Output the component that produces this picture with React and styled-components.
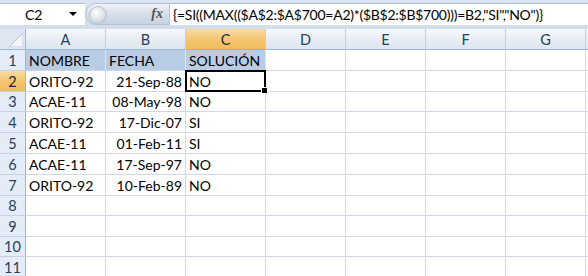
import React from 'react'
import styled, { createGlobalStyle, css } from 'styled-components'

const GlobalStyle = createGlobalStyle`
  body {
    margin: 0;
    background: #ffffff;
    overflow: hidden;
  }
`

const COLS = ['A', 'B', 'C', 'D', 'E', 'F', 'G']
const ROW_HEIGHTS = [21, 21, 20, 21, 21, 21, 21, 20, 21, 20, 21]

const data = [
  ['NOMBRE', 'FECHA', 'SOLUCIÓN'],
  ['ORITO-92', '21-Sep-88', 'NO'],
  ['ACAE-11', '08-May-98', 'NO'],
  ['ORITO-92', '17-Dic-07', 'SI'],
  ['ACAE-11', '01-Feb-11', 'SI'],
  ['ACAE-11', '17-Sep-97', 'NO'],
  ['ORITO-92', '10-Feb-89', 'NO'],
]

const Sheet = styled.div`
  width: 588px;
  height: 276px;
  font-family: Lato, "Liberation Sans", sans-serif;
  font-size: 14px;
  color: #000;
  overflow: hidden;
`

const FormulaBar = styled.div`
  display: flex;
  align-items: stretch;
  height: 29px;
  box-sizing: border-box;
  padding: 3px 0 4px 0;
  background: linear-gradient(#dbe5f1, #d3deec);
`

const NameBox = styled.div`
  width: 85px;
  display: flex;
  align-items: center;
  background: #fff;
  border-top: 1px solid #b6c6da;
  box-sizing: border-box;
  padding-left: 25px;
  position: relative;
`

const DropArrow = styled.span`
  position: absolute;
  right: 8px;
  top: 8px;
  width: 0;
  height: 0;
  border-left: 4px solid transparent;
  border-right: 4px solid transparent;
  border-top: 4px solid #000;
`

const Pill = styled.div`
  width: 85px;
  display: flex;
  align-items: center;
  justify-content: flex-end;
  padding-right: 6px;
  box-sizing: border-box;
  background: linear-gradient(#eef2f8, #d4dde9 55%, #c9d4e2);
  border: 1px solid #b3c2d6;
  border-radius: 12px 0 0 12px;
  position: relative;
`

const Knob = styled.span`
  position: absolute;
  left: 3px;
  top: 2px;
  width: 16px;
  height: 16px;
  border-radius: 50%;
  background: radial-gradient(circle at 40% 35%, #ffffff, #d8dee6 60%, #aeb8c6);
  border: 1px solid #b9c4d2;
`

const Fx = styled.span`
  font-family: "Liberation Serif", serif;
  font-style: italic;
  font-weight: bold;
  font-size: 14px;
  color: #555;
`

const FormulaText = styled.div`
  flex: 1;
  background: #fff;
  border-top: 1px solid #a9b9cf;
  display: flex;
  align-items: center;
  padding-left: 3px;
  white-space: nowrap;
  letter-spacing: -0.25px;
`

const Grid = styled.div`
  display: grid;
  grid-template-columns: 26px repeat(7, 80px) 1fr;
  grid-template-rows: 21px ${ROW_HEIGHTS.map(h => h + 'px').join(' ')};
`

const headerBase = css`
  display: flex;
  align-items: center;
  justify-content: center;
  box-sizing: border-box;
  color: #27415f;
  font-size: 14.5px;
`

const selectedBg = css`
  background: linear-gradient(#f9dca4, #f4c672 50%, #f1bb5c);
  color: #1e2a3a;
`

const Corner = styled.div`
  ${headerBase};
  background: #dde6f1;
  border-right: 1px solid #9eb6ce;
  border-bottom: 1px solid #9eb6ce;
  position: relative;
  svg {
    position: absolute;
    right: 2px;
    bottom: 2px;
  }
`

const ColHeader = styled.div`
  ${headerBase};
  background: linear-gradient(#f7f9fc, #e7edf5 55%, #dde5ef);
  border-right: 1px solid #c3cfdf;
  border-bottom: 1px solid #9eb6ce;
  ${p => p.$selected && selectedBg};
  ${p => p.$selected && css`border-bottom-color: #f2a33c;`};
`

const RowHeader = styled.div`
  ${headerBase};
  background: #e4ecf7;
  border-right: 1px solid #9eb6ce;
  border-bottom: 1px solid #c5d3e4;
  align-items: flex-end;
  padding-bottom: 1px;
  ${p => p.$selected && selectedBg};
`

const Cell = styled.div`
  box-sizing: border-box;
  border-right: 1px solid #d0d7e5;
  border-bottom: 1px solid #d0d7e5;
  display: flex;
  align-items: flex-end;
  justify-content: ${p => (p.$right ? 'flex-end' : 'flex-start')};
  padding: 0 3px 1px 3px;
  white-space: nowrap;
  position: relative;
  background: ${p => (p.$head ? '#b8cce4' : '#fff')};
  ${p => p.$head && css`border-right-color: #dce6f1;`};
  ${p => p.$active && css`z-index: 2;`};
`

const ActiveFrame = styled.span`
  position: absolute;
  left: -1px;
  top: -1px;
  right: -1px;
  bottom: -1px;
  border: 2px solid #000;
  pointer-events: none;
  &::after {
    content: '';
    position: absolute;
    right: -4px;
    bottom: -4px;
    width: 5px;
    height: 5px;
    background: #000;
    border: 1px solid #fff;
  }
`

function App() {
  const rows = ROW_HEIGHTS.map((h, i) => i)
  return (
    <Sheet>
      <GlobalStyle />
      <FormulaBar>
        <NameBox>
          C2
          <DropArrow />
        </NameBox>
        <Pill>
          <Knob />
          <Fx>fx</Fx>
        </Pill>
        <FormulaText>{'{=SI((MAX(($A$2:$A$700=A2)*($B$2:$B$700)))=B2,"SI","NO")}'}</FormulaText>
      </FormulaBar>
      <Grid>
        <Corner>
          <svg width="14" height="14" viewBox="0 0 14 14">
            <polygon points="14,0 14,14 0,14" fill="#f3f6fa" stroke="#b7c7da" strokeWidth="1" />
          </svg>
        </Corner>
        {COLS.map(c => (
          <ColHeader key={c} $selected={c === 'C'}>{c}</ColHeader>
        ))}
        <ColHeader />
        {rows.map(r => {
          const isActiveRow = r === 1
          return (
            <React.Fragment key={r}>
              <RowHeader $selected={isActiveRow}>{r + 1}</RowHeader>
              {COLS.map((c, ci) => {
                const v = data[r] ? data[r][ci] : undefined
                const active = isActiveRow && ci === 2
                return (
                  <Cell key={c} $right={ci === 1 && r > 0} $head={r === 0 && ci < 3} $active={active}>
                    {v}
                    {active && <ActiveFrame />}
                  </Cell>
                )
              })}
              <Cell />
            </React.Fragment>
          )
        })}
      </Grid>
    </Sheet>
  )
}

export default App
